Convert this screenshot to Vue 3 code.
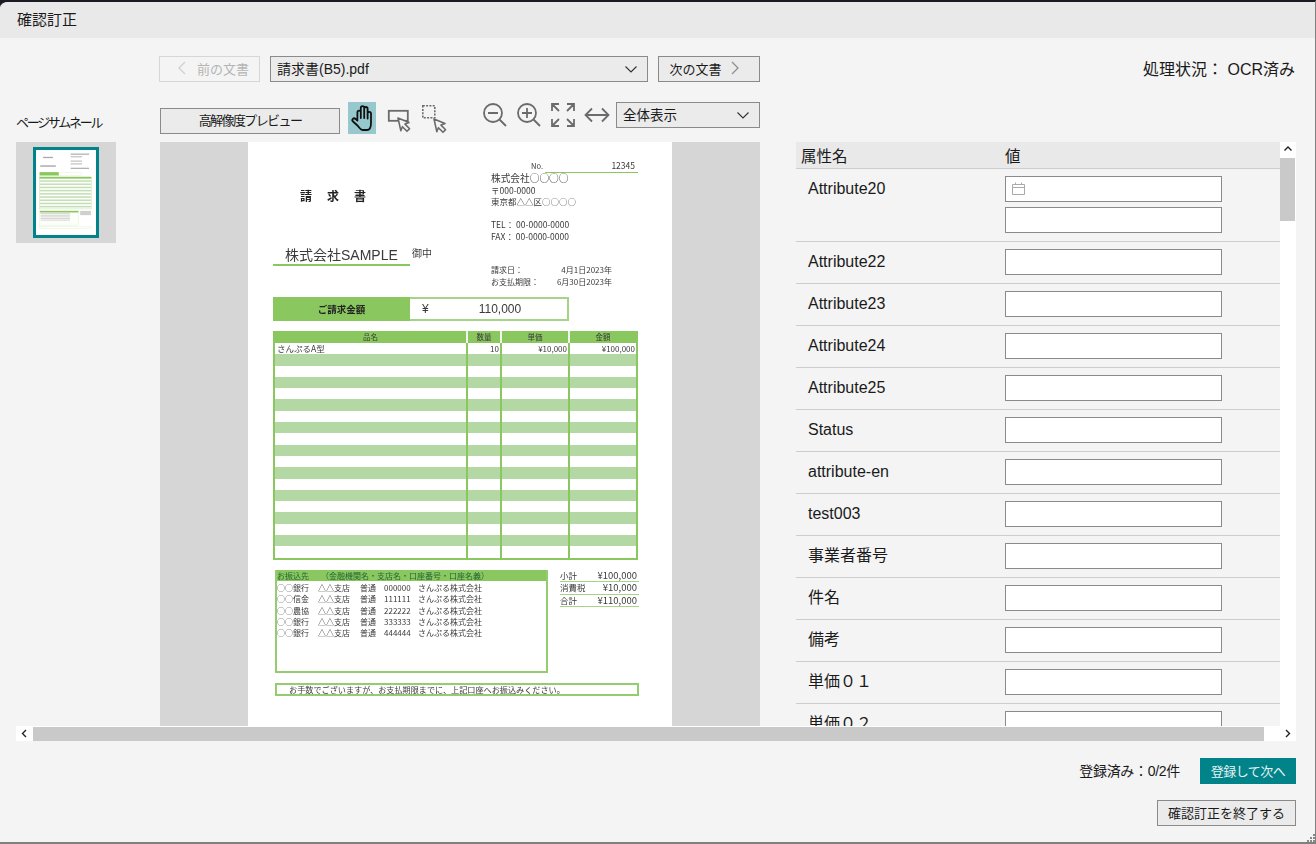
<template>
  <div class="window">
    <header class="titlebar">確認訂正</header>

    <div class="nav-row">
      <button class="btn btn-prev" disabled>
        <svg width="16" height="16" viewBox="0 0 16 16"><path d="M11 2 5 8l6 6" class="chev" /></svg>
        前の文書
      </button>
      <div class="select select-doc">
        <span>請求書(B5).pdf</span>
        <svg width="12" height="7" viewBox="0 0 12 7"><path d="M.5.5 6 6 11.500.5" class="chev-dark" /></svg>
      </div>
      <button class="btn btn-next">
        次の文書
        <svg width="16" height="16" viewBox="0 0 16 16"><path d="M4 2l6 6-6 6" class="chev" /></svg>
      </button>
      <div class="status">処理状況： OCR済み</div>
    </div>

    <div class="tool-row">
      <div class="thumb-label">ページサムネール</div>
      <button class="btn btn-hires">高解像度プレビュー</button>
      <button class="tool tool-on">
        <svg width="28" height="32" viewBox="0 0 28 32">
          <path d="M10 24 5 19.500C3.200 17.600 5.600 15.200 7.600 17L9.400 18.600V10.500C9.400 8 12.800 8 12.800 10.500V16 6C12.800 3.600 16.200 3.600 16.200 6V16 6.800C16.200 4.400 19.600 4.400 19.600 6.800V16.500 11.500C19.600 9.200 23 9.200 23 11.500V21C23 25 21.500 28 19 28H14.500C12.500 28 11.500 26 10 24Z" class="hand" />
        </svg>
      </button>
      <svg class="icon-rect" width="30" height="32" viewBox="0 0 30 32">
        <rect x="4.800" y="8.800" width="19" height="10" class="ico" />
        <path d="M14 16l11 4.500-4 1.600 4.600 4.600-2.600 2.600-4.600-4.600-1.600 4Z" class="ico-fill" />
      </svg>
      <svg class="icon-sel" width="32" height="32" viewBox="0 0 32 32">
        <rect x="4.800" y="3.800" width="12" height="12" class="ico-dash" />
        <path d="M16 17l11 4.500-4 1.600 4.600 4.600-2.600 2.600-4.600-4.600-1.600 4Z" class="ico-fill" />
      </svg>
      <svg class="icon-zoom-out" width="30" height="32" viewBox="0 0 30 32">
        <circle cx="13" cy="11" r="9" class="ico" />
        <path d="M8 11h10M19.500 17.500 26 24" class="ico" />
      </svg>
      <svg width="30" height="32" viewBox="0 0 30 32" class="icon-gap">
        <circle cx="13" cy="11" r="9" class="ico" />
        <path d="M8 11h10M13 6v10M19.500 17.500 26 24" class="ico" />
      </svg>
      <svg width="30" height="32" viewBox="0 0 30 32" class="icon-gap">
        <path d="M4 9V2h7M4 2l7 7M26 9V2h-7M26 2l-7 7M4 17v7h7M4 24l7-7M26 17v7h-7M26 24l-7-7" class="ico" />
      </svg>
      <svg width="30" height="32" viewBox="0 0 30 32" class="icon-gap">
        <path d="M4 13h22M10 6.500 3.500 13l6.500 6.500M20 6.500l6.500 6.500-6.500 6.500" class="ico" />
      </svg>
      <div class="select select-zoom">
        <span>全体表示</span>
        <svg width="12" height="7" viewBox="0 0 12 7"><path d="M.5.5 6 6 11.500.5" class="chev-dark" /></svg>
      </div>
    </div>

    <div class="content">
      <aside class="thumbs">
        <div class="thumb">
          <div class="thumb-page">
            <svg width="60" height="85" viewBox="0 0 424 600">
              <rect width="424" height="600" fill="#fff" />
              <g fill="#a8a8a8">
                <rect x="50" y="48" width="70" height="9" />
                <rect x="245" y="25" width="130" height="8" />
                <rect x="245" y="45" width="80" height="6" />
                <rect x="245" y="75" width="80" height="6" />
                <rect x="245" y="95" width="80" height="6" />
                <rect x="30" y="108" width="110" height="10" />
                <rect x="245" y="125" width="130" height="8" />
              </g>
              <rect x="25" y="156" width="137" height="24" fill="#8ac75f" />
              <rect x="162" y="158" width="158" height="20" fill="#fff" stroke="#cfe6bb" stroke-width="2" />
              <rect x="25" y="190" width="365" height="226" fill="#fff" stroke="#b8dc9c" stroke-width="3" />
              <rect x="25" y="190" width="365" height="12" fill="#8ac75f" />
              <rect v-for="n in 9" :key="n" x="27" :y="191 + n * 22.600" width="361" height="11" fill="#c4dfb5" />
              <rect x="27" y="430" width="273" height="103" fill="#fcfef9" stroke="#d3e6bd" stroke-width="2" />
              <rect x="27" y="430" width="273" height="11" fill="#8ac75f" />
              <g fill="#cfcfcf">
                <rect v-for="n in 5" :key="n" x="32" :y="435 + n * 11.400" width="208" height="6" />
                <rect x="312" y="430" width="76" height="30" />
              </g>
              <rect x="27" y="542" width="364" height="13" fill="#fbfdf7" stroke="#d9e9c8" stroke-width="2" />
            </svg>
          </div>
        </div>
      </aside>

      <div class="viewer">
        <div class="page">
          <div class="doc-head">
            <div class="head-left">
              <div class="doc-title">請求書</div>
              <div class="client">
                <span class="client-name">株式会社SAMPLE</span>
                <span class="client-suffix">御中</span>
              </div>
            </div>
            <div class="head-right">
              <div class="doc-no"><span class="no-label">No.</span><span class="no-value">12345</span></div>
              <div class="line company">株式会社○○○○</div>
              <div class="line">〒000-0000</div>
              <div class="line">東京都△△区○○○○</div>
              <div class="line tel">TEL： 00-0000-0000</div>
              <div class="line fax">FAX： 00-0000-0000</div>
              <div class="date-row first"><span>請求日：</span><span>4月1日2023年</span></div>
              <div class="date-row"><span>お支払期限：</span><span>6月30日2023年</span></div>
            </div>
          </div>

          <div class="amount">
            <div class="amount-label">ご請求金額</div>
            <div class="amount-value"><span>¥</span><span class="amount-num">110,000</span></div>
          </div>

          <div class="items">
            <div class="items-row items-head">
              <div>品名</div><div>数量</div><div>単価</div><div>金額</div>
            </div>
            <div v-for="n in 19" :key="n" class="items-row" :class="{ striped: n % 2 === 0 }">
              <div class="cell-name">{{ n === 1 ? 'さんぷるA型' : '' }}</div>
              <div class="cell-num">{{ n === 1 ? '10' : '' }}</div>
              <div class="cell-num">{{ n === 1 ? '¥10,000' : '' }}</div>
              <div class="cell-num">{{ n === 1 ? '¥100,000' : '' }}</div>
            </div>
          </div>

          <div class="doc-foot">
            <div class="bank">
              <div class="bank-head">お振込先<span class="bank-note">（金融機関名・支店名・口座番号・口座名義）</span></div>
              <div v-for="b in banks" :key="b.no" class="bank-row">
                <span>{{ b.name }}</span><span>△△支店</span><span>普通</span><span>{{ b.no }}</span><span>さんぷる株式会社</span>
              </div>
            </div>
            <div class="summary">
              <div class="sum-row"><span>小計</span><span class="sum-val">¥100,000</span></div>
              <div class="sum-row"><span>消費税</span><span class="sum-val">¥10,000</span></div>
              <div class="sum-row"><span>合計</span><span class="sum-val">¥110,000</span></div>
            </div>
          </div>

          <div class="notice">お手数でございますが、お支払期限までに、上記口座へお振込みください。</div>
        </div>
      </div>

      <div class="attrs">
        <div class="attrs-table">
          <div class="attrs-head">
            <div class="col-name">属性名</div>
            <div>値</div>
          </div>
          <div v-for="row in rows" :key="row.name" class="attr-row">
            <div class="attr-name">{{ row.name }}</div>
            <div class="attr-values">
              <div v-if="row.date" class="date-input">
                <input type="text" />
                <svg class="cal" width="13" height="13" viewBox="0 0 13 13">
                  <path d="M.5 2.500h12v10H.5zM.5 5.500h12M3.500.5v2M9.500.5v2" />
                </svg>
              </div>
              <input type="text" />
            </div>
          </div>
        </div>
        <div class="vscroll">
          <svg width="16" height="16" viewBox="0 0 16 16"><path d="M4.500 8.500 8 5l3.500 3.500" class="chev-small" /></svg>
          <div class="vthumb"></div>
        </div>
      </div>
    </div>

    <div class="hscroll">
      <svg width="17" height="15" viewBox="0 0 17 15"><path d="M10 4 6.500 7.500 10 11" class="chev-small" /></svg>
      <div class="hthumb"></div>
      <svg width="32" height="15" viewBox="0 0 32 15"><path d="M22 4l3.500 3.500L22 11" class="chev-small" /></svg>
    </div>

    <div class="foot-row">
      <span class="progress">登録済み：0/2件</span>
      <button class="btn-primary">登録して次へ</button>
    </div>
    <div class="foot-row foot-end">
      <button class="btn btn-finish">確認訂正を終了する</button>
    </div>

    <svg class="grip" width="8" height="8" viewBox="0 0 8 8">
      <path d="M6 0h2v2H6zM3 3h2v2H3zM6 3h2v2H6zM0 6h2v2H0zM3 6h2v2H3zM6 6h2v2H6z" />
    </svg>
  </div>
</template>

<script setup>
const banks = [
  { name: '○○銀行', no: '000000' },
  { name: '○○信金', no: '111111' },
  { name: '○○農協', no: '222222' },
  { name: '○○銀行', no: '333333' },
  { name: '○○銀行', no: '444444' }
]

const rows = [
  { name: 'Attribute20', date: true },
  { name: 'Attribute22' },
  { name: 'Attribute23' },
  { name: 'Attribute24' },
  { name: 'Attribute25' },
  { name: 'Status' },
  { name: 'attribute-en' },
  { name: 'test003' },
  { name: '事業者番号' },
  { name: '件名' },
  { name: '備考' },
  { name: '単価０１' },
  { name: '単価０２' }
]
</script>

<style>
html,
body {
  background: #1b1b22;
}
</style>

<style scoped>
.window {
  position: relative;
  box-sizing: border-box;
  width: 1316px;
  height: 844px;
  border-top: 2px solid #1b1b22;
  border-bottom: 2px solid #808080;
  border-right: 1px solid #808080;
  border-top-left-radius: 8px;
  background: #f4f4f4;
  overflow: hidden;
  font-family: "Liberation Sans", "Noto Sans CJK JP", sans-serif;
  font-size: 14px;
  color: #1a1a1a;
}

.titlebar {
  height: 36px;
  padding-left: 17px;
  line-height: 36px;
  font-size: 15px;
  background: #e9e9e9;
}

.nav-row {
  display: flex;
  align-items: center;
  height: 26px;
  margin-top: 18px;
  padding-left: 159px;
}

.btn {
  display: flex;
  align-items: center;
  justify-content: center;
  box-sizing: border-box;
  height: 26px;
  padding: 0 0 2px;
  border: 1px solid #8a8a8a;
  background: #ebebeb;
  color: #1a1a1a;
  font-family: inherit;
  font-size: 13px;
}

.btn-prev {
  width: 101px;
  gap: 7px;
  padding-left: 4px;
  border-color: #d6d6d6;
  background: #f4f4f4;
  color: #b4b4b4;
}

.btn-prev .chev {
  stroke: #d0d0d0;
}

.btn-next {
  width: 102px;
  margin-left: 10px;
  padding-right: 5px;
  gap: 6px;
}

.chev {
  fill: none;
  stroke: #8f8f8f;
  stroke-width: 1.300;
}

.chev-dark {
  fill: none;
  stroke: #333;
  stroke-width: 1.100;
}

.chev-small {
  fill: none;
  stroke: #222;
  stroke-width: 1.400;
}

.select {
  display: flex;
  align-items: center;
  justify-content: space-between;
  box-sizing: border-box;
  height: 26px;
  padding: 0 10px 0 6px;
  border: 1px solid #8a8a8a;
  background: #ebebeb;
}

.select span {
  margin-bottom: 2px;
}

.select-doc {
  width: 378px;
  margin-left: 10px;
  font-size: 14px;
}

.select-zoom {
  width: 144px;
  margin-top: -6px;
  margin-left: 4px;
  font-size: 13.500px;
}

.status {
  margin-top: -2px;
  margin-left: auto;
  margin-right: 20px;
  font-size: 16px;
}

.tool-row {
  display: flex;
  align-items: center;
  height: 32px;
  margin-top: 20px;
  padding-left: 16px;
}

.thumb-label {
  width: 144px;
  margin-top: 6px;
  font-size: 13px;
  letter-spacing: -2.300px;
  white-space: nowrap;
}

.btn-hires {
  width: 180px;
  margin-top: 5px;
  letter-spacing: -1.600px;
}

.tool {
  width: 28px;
  height: 32px;
  margin-left: 8px;
  padding: 0;
  border: none;
  background: none;
}

.tool-on {
  background: #96c8cd;
}

.tool svg {
  display: block;
}

.hand {
  fill: #96c8cd;
  stroke: #111;
  stroke-width: 1.800;
  stroke-linejoin: round;
}

.ico {
  fill: none;
  stroke: #6b6b6b;
  stroke-width: 1.800;
}

.ico-fill {
  fill: #f4f4f4;
  stroke: #6b6b6b;
  stroke-width: 1.600;
  stroke-linejoin: round;
}

.ico-dash {
  fill: none;
  stroke: #6b6b6b;
  stroke-width: 1.600;
  stroke-dasharray: 2 1.300;
}

.icon-rect {
  margin-left: 8px;
}

.icon-sel {
  margin-left: 4px;
}

.icon-zoom-out {
  margin-left: 30px;
}

.icon-gap {
  margin-left: 4px;
}

.content {
  display: flex;
  height: 584px;
  margin-top: 8px;
  padding-left: 16px;
}

.thumbs {
  width: 144px;
  flex: none;
}

.thumb {
  display: flex;
  align-items: center;
  justify-content: center;
  width: 100px;
  height: 101px;
  background: #d6d6d6;
}

.thumb-page {
  border: 3px solid #00848a;
  background: #fff;
  overflow: hidden;
}

.thumb-page svg {
  display: block;
  filter: blur(0.4px);
}

.viewer {
  display: flex;
  justify-content: center;
  flex: none;
  width: 600px;
  background: #d6d6d6;
  overflow: hidden;
}

.page {
  box-sizing: border-box;
  width: 424px;
  height: 584px;
  padding-left: 25px;
  background: #fff;
  color: #3a3a3a;
  font-family: "Noto Sans CJK JP", "Liberation Sans", sans-serif;
  filter: blur(0.3px);
}

.doc-head {
  display: flex;
}

.head-left {
  width: 218px;
}

.doc-title {
  margin-top: 46px;
  padding-left: 27px;
  font-size: 12px;
  line-height: 16px;
  font-weight: 700;
  letter-spacing: 15px;
  color: #222;
}

.client {
  display: flex;
  align-items: flex-start;
  margin-top: 42px;
}

.client-name {
  box-sizing: border-box;
  width: 137px;
  height: 20px;
  padding-left: 12px;
  border-bottom: 2px solid #8ac75f;
  font-family: "Liberation Sans", "Noto Sans CJK JP", sans-serif;
  font-size: 14px;
  line-height: 18px;
}

.client-suffix {
  margin-left: 2px;
  font-size: 10px;
  line-height: 14px;
}

.head-right {
  width: 147px;
  padding-top: 18px;
  font-size: 8.500px;
}

.doc-no {
  display: flex;
  justify-content: space-between;
  height: 12px;
  margin-left: 54px;
  padding-right: 3px;
  border-bottom: 1px solid #8ac75f;
  line-height: 11px;
}

.no-label {
  margin-left: -14px;
  font-size: 7.500px;
}

.line {
  height: 11.500px;
  line-height: 11.500px;
}

.company {
  font-size: 9.700px;
}

.tel {
  height: 12px;
  margin-top: 10px;
  line-height: 12px;
}

.fax {
  height: 12px;
  line-height: 12px;
}

.date-row {
  display: flex;
  justify-content: space-between;
  width: 121px;
  height: 12px;
  font-size: 8px;
  line-height: 12px;
}

.first {
  margin-top: 22px;
}

.amount {
  display: flex;
  width: 296px;
  height: 24px;
  margin-top: 9.500px;
}

.amount-label {
  width: 137px;
  background: #8ac75f;
  color: #222;
  font-size: 9.500px;
  font-weight: 700;
  line-height: 24px;
  text-align: center;
}

.amount-value {
  display: flex;
  flex: 1;
  box-sizing: border-box;
  padding-left: 12px;
  border: 2px solid #a6d487;
  border-left: none;
  font-family: "Liberation Sans", sans-serif;
  font-size: 12px;
  line-height: 20px;
}

.amount-num {
  margin-left: 50px;
}

.items {
  box-sizing: border-box;
  width: 365px;
  margin-top: 10px;
  border: 2px solid #8ac75f;
  border-top: none;
}

.items-row {
  display: grid;
  grid-template-columns: 193px 34px 68px 66px;
  height: 11.300px;
  font-size: 7.500px;
  line-height: 11.300px;
}

.items-row > div {
  box-sizing: border-box;
  min-width: 0;
  border-right: 2px solid #8ac75f;
}

.items-row > div:last-child {
  border-right: none;
}

.items-head {
  height: 12px;
  background: #8ac75f;
  line-height: 12px;
  text-align: center;
}

.items-head > div {
  border-right-color: #f0f7ea;
}

.striped {
  background: #b4d8a4;
}

.cell-name {
  padding-left: 2px;
  font-size: 8.500px;
}

.cell-num {
  padding-right: 1px;
  font-size: 8px;
  text-align: right;
}

.doc-foot {
  display: flex;
  margin-top: 10.300px;
  margin-left: 2px;
}

.bank {
  box-sizing: border-box;
  width: 273px;
  height: 103px;
  border: 2px solid #96cc70;
  border-top: none;
  font-size: 8px;
}

.bank-head {
  height: 11px;
  margin-bottom: 1px;
  background: #8ac75f;
  color: #263;
  line-height: 11px;
  white-space: nowrap;
}

.bank-note {
  margin-left: 12px;
}

.bank-row {
  display: grid;
  grid-template-columns: 41px 42px 24px 34px 1fr;
  height: 11.300px;
  line-height: 11.300px;
}

.summary {
  width: 79px;
  margin-left: 12px;
  font-size: 8.500px;
}

.sum-row {
  display: flex;
  justify-content: space-between;
  height: 11.500px;
  padding-right: 2px;
  border-bottom: 1px solid #a6d487;
  line-height: 11.500px;
}

.sum-val {
  font-size: 9.500px;
}

.notice {
  box-sizing: border-box;
  width: 364px;
  height: 13px;
  margin-top: 10px;
  margin-left: 2px;
  padding-left: 12px;
  border: 2px solid #96cc70;
  font-size: 8.150px;
  line-height: 9px;
  white-space: nowrap;
}

.attrs {
  display: flex;
  flex: none;
  width: 500px;
  margin-left: 36px;
  overflow: hidden;
}

.attrs-table {
  flex: none;
  width: 484px;
  overflow: hidden;
}

.attrs-head {
  display: flex;
  height: 26px;
  border-bottom: 1px solid #cdcdcd;
  background: #e9e9e9;
  font-size: 15.500px;
  line-height: 30px;
}

.col-name {
  width: 209px;
  padding-left: 5px;
  box-sizing: border-box;
}

.attr-row {
  display: flex;
  box-sizing: border-box;
  padding: 7px 0 8px;
  border-bottom: 1px solid #cdcdcd;
}

.attr-name {
  box-sizing: border-box;
  width: 209px;
  padding-left: 12px;
  line-height: 26px;
  font-size: 16px;
}

.attr-values {
  display: flex;
  flex-direction: column;
  gap: 5px;
}

.attr-values input {
  display: block;
  box-sizing: border-box;
  width: 217px;
  height: 26px;
  margin: 0;
  padding: 0 6px;
  border: 1px solid #8a8a8a;
  border-radius: 0;
  background: #fff;
  outline: none;
}

.date-input {
  position: relative;
}

.cal {
  position: absolute;
  left: 7px;
  top: 6px;
  fill: none;
  stroke: #a9a9a9;
}

.vscroll {
  flex: none;
  width: 16px;
  background: #fff;
}

.vscroll svg {
  display: block;
}

.vthumb {
  width: 15px;
  height: 63px;
  background: #c9c9c9;
}

.hscroll {
  display: flex;
  align-items: center;
  width: 1280px;
  height: 15px;
  margin-left: 16px;
  background: #fff;
}

.hscroll svg {
  flex: none;
}

.hthumb {
  flex: 1;
  height: 14px;
  background: #c9c9c9;
}

.foot-row {
  display: flex;
  align-items: center;
  justify-content: flex-end;
  height: 26px;
  margin-top: 17px;
  padding-right: 19px;
}

.foot-end {
  margin-top: 16px;
}

.progress {
  margin-right: 20px;
  margin-bottom: 2px;
  font-size: 14px;
  letter-spacing: -0.300px;
}

.btn-primary {
  box-sizing: border-box;
  width: 96px;
  height: 26px;
  padding: 0 0 2px;
  border: none;
  background: #00848a;
  color: #e9f3f4;
  font-family: inherit;
  font-size: 13px;
  letter-spacing: -0.500px;
}

.btn-finish {
  width: 139px;
  font-size: 13px;
}

.grip {
  position: absolute;
  right: 0;
  bottom: 0;
  fill: #8a8a8a;
}
</style>
